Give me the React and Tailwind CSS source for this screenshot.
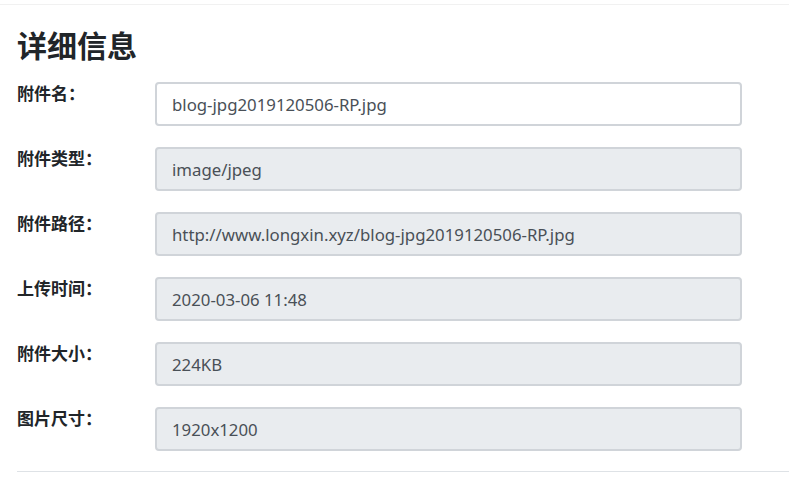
import React from "react";

const rows = [
  { label: "附件名：", value: "blog-jpg2019120506-RP.jpg", disabled: false },
  { label: "附件类型：", value: "image/jpeg", disabled: true },
  { label: "附件路径：", value: "http://www.longxin.xyz/blog-jpg2019120506-RP.jpg", disabled: true },
  { label: "上传时间：", value: "2020-03-06 11:48", disabled: true },
  { label: "附件大小：", value: "224KB", disabled: true },
  { label: "图片尺寸：", value: "1920x1200", disabled: true },
];

export default function App() {
  return (
    <div
      className="w-[789px] h-[486px] bg-white overflow-hidden text-[#212529]"
      style={{ fontFamily: '"Noto Sans", "Noto Sans CJK SC", sans-serif' }}
    >
      <div className="h-[5px] border-b border-[#f1f1f1]" />
      <div className="pl-[17px]">
        <h2 className="mt-[23px] mb-[18px] text-[30px] leading-[36px] font-bold">详细信息</h2>

        {rows.map((row) => (
          <div key={row.label} className="flex mb-[21px]">
            <label className="w-[138px] text-[17px] leading-[24px] font-bold">{row.label}</label>
            <input
              readOnly
              disabled={row.disabled}
              value={row.value}
              className={
                "w-[587px] h-[44px] px-[15px] pt-[1px] text-[16.8px] text-[#495057] border-2 border-[#d0d4d9] rounded-[4px] outline-none " +
                (row.disabled ? "bg-[#e9ecef]" : "bg-white")
              }
            />
          </div>
        ))}

        <hr className="border-0 border-t border-[#dee2e6] mt-[-1px]" />
      </div>
    </div>
  );
}
